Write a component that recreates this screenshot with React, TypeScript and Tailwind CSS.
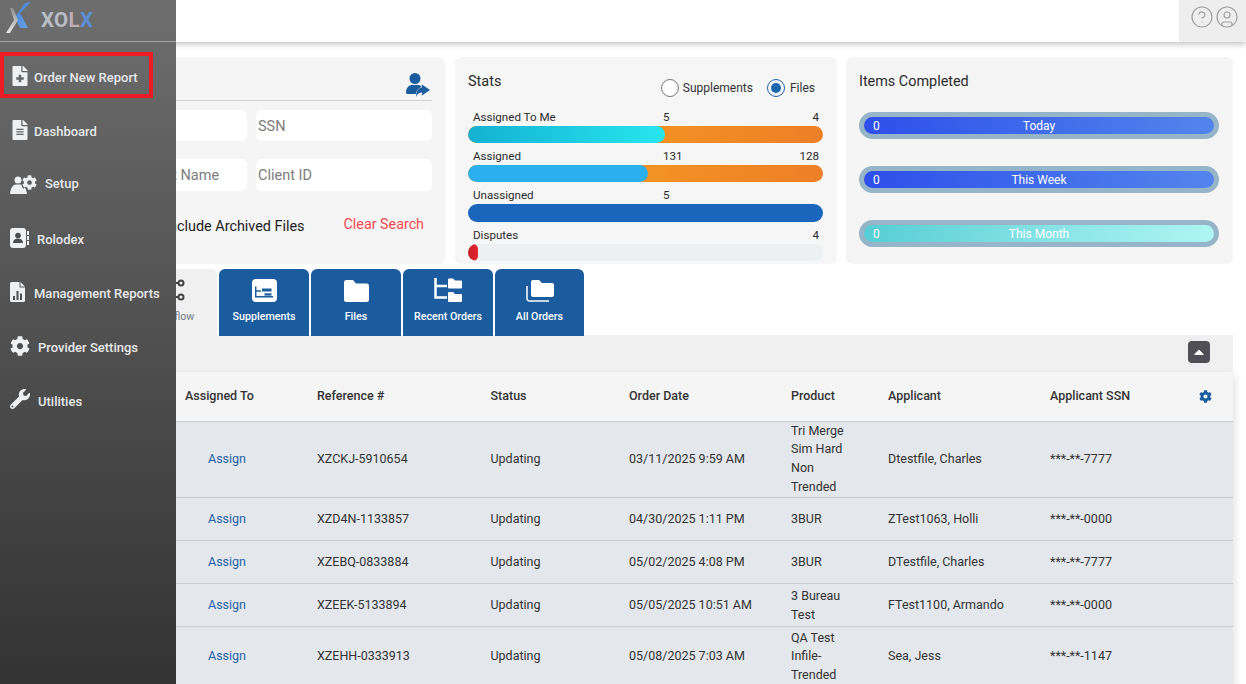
import React from "react";
import { FaFileMedical, FaFileAlt, FaCog, FaWrench, FaCaretUp } from "react-icons/fa";
import { CircleHelp, CircleUser } from "lucide-react";

const SetupIcon = () => (
  <span className="relative block h-[20px] w-[28px] text-[#eef0f2]">
    <svg width="28" height="20" viewBox="0 0 28 20" className="absolute left-0 top-0" fill="currentColor">
      <circle cx="8" cy="6" r="3.500" />
      <path d="M0 20C0.500 15 2 10.500 6.500 10.500H10.500C14 10.500 16 14 17 20Z" />
    </svg>
    <FaCog className="absolute left-[12px] top-[1px] text-[15px] drop-shadow-[-1px_1px_0_#5a5a5a]" />
  </span>
);

const navItems: { label: string; icon: React.ReactNode; gap: string; shift: string }[] = [
  { label: "Order New Report", icon: <FaFileMedical className="-translate-y-[2px] text-[20px] text-[#eef0f2]" />, gap: "w-[24px]", shift: "" },
  { label: "Dashboard", icon: <FaFileAlt className="-translate-y-[2px] text-[20px] text-[#eef0f2]" />, gap: "w-[24px]", shift: "" },
  { label: "Setup", icon: <SetupIcon />, gap: "w-[35px]", shift: "-translate-y-[2px]" },
  {
    label: "Rolodex",
    icon: (
      <svg width="19" height="20" viewBox="0 0 19 20" className="-translate-y-[2px]">
        <rect x="0" y="0" width="16" height="20" rx="3" fill="#eef0f2" />
        <rect x="17" y="3" width="2" height="4" fill="#eef0f2" />
        <rect x="17" y="8" width="2" height="4" fill="#eef0f2" />
        <rect x="17" y="13" width="2" height="4" fill="#eef0f2" />
        <circle cx="8" cy="7.500" r="2.800" fill="#4d4d4d" />
        <path d="M3 15c0-3 2-4.500 5-4.500s5 1.500 5 4.500z" fill="#4d4d4d" />
      </svg>
    ),
    gap: "w-[27px]",
    shift: "",
  },
  {
    label: "Management Reports",
    icon: (
      <svg width="15" height="20" viewBox="0 0 15 20" className="-translate-y-[2px]">
        <path d="M1.500 0H9.500V5.500H15V18.500A1.500 1.500 0 0 1 13.500 20H1.500A1.500 1.500 0 0 1 0 18.500V1.500A1.500 1.500 0 0 1 1.500 0Z" fill="#eef0f2" />
        <path d="M10.500 0L15 4.500H10.500Z" fill="#eef0f2" />
        <rect x="3" y="14" width="2" height="4" fill="#4d4d4d" />
        <rect x="6.500" y="9" width="2" height="9" fill="#4d4d4d" />
        <rect x="10" y="11.500" width="2" height="6.500" fill="#4d4d4d" />
      </svg>
    ),
    gap: "w-[24px]",
    shift: "",
  },
  { label: "Provider Settings", icon: <FaCog className="-translate-y-[2px] text-[20px] text-[#eef0f2]" />, gap: "w-[28px]", shift: "" },
  { label: "Utilities", icon: <FaWrench className="-translate-y-[3px] text-[20px] text-[#eef0f2]" />, gap: "w-[28px]", shift: "" },
];

const rows = [
  ["XZCKJ-5910654", "03/11/2025 9:59 AM", "Tri Merge Sim Hard Non Trended", "Dtestfile, Charles", "***-**-7777"],
  ["XZD4N-1133857", "04/30/2025 1:11 PM", "3BUR", "ZTest1063, Holli", "***-**-0000"],
  ["XZEBQ-0833884", "05/02/2025 4:08 PM", "3BUR", "DTestfile, Charles", "***-**-7777"],
  ["XZEEK-5133894", "05/05/2025 10:51 AM", "3 Bureau Test", "FTest1100, Armando", "***-**-0000"],
  ["XZEHH-0333913", "05/08/2025 7:03 AM", "QA Test Infile- Trended", "Sea, Jess", "***-**-1147"],
];

function Sidebar() {
  return (
    <aside className="absolute left-0 top-0 z-20 h-[684px] w-[176px] bg-gradient-to-b from-[#6e6e6e] to-[#333333]">
      <div className="flex h-[42px] items-center gap-[9px] border-b border-[#a3a3a3] pl-[6px]">
        <svg width="26" height="41" viewBox="6 0 26 41">
          <defs>
            <linearGradient id="xb" x1="0" y1="0" x2="1" y2="1">
              <stop offset="0" stopColor="#3f7fd6" />
              <stop offset="1" stopColor="#6ea6ea" />
            </linearGradient>
            <linearGradient id="xg" x1="0" y1="0" x2="0" y2="1">
              <stop offset="0" stopColor="#8f8f8f" />
              <stop offset="1" stopColor="#e4e4e4" />
            </linearGradient>
          </defs>
          <path d="M31 2L20 13L28 28H20L15 17L25 3Z" fill="url(#xb)" />
          <path d="M10 8H13L18 20L10 33H6L14 20Z" fill="url(#xg)" />
        </svg>
        <span className="text-[20.500px] font-bold tracking-[0.3px] text-[#b9bdc4]">
          XO<span className="text-[#bcaeb4]">L</span>
          <span className="text-[#5b8fd3]">X</span>
        </span>
      </div>
      <nav className="pt-[9px]">
        {navItems.map((item) => (
          <div key={item.label} className={`flex h-[54px] items-center text-[13px] font-medium text-[#e6e8ea] ${item.shift}`}>
            <div className="h-full w-[9px] shrink-0" />
            <div className={`${item.gap} ml-[1px] flex shrink-0 items-center`}>{item.icon}</div>
            <span>{item.label}</span>
          </div>
        ))}
      </nav>
      <div className="absolute left-0 top-[52px] h-[46px] w-[153px] border-[4px] border-[#ed1c24]" />
    </aside>
  );
}

function Header() {
  return (
    <header className="flex h-[42px] justify-end bg-white shadow-[0_2px_6px_rgba(0,0,0,0.25)]">
      <div className="flex w-[67px] items-center justify-center gap-[1px] bg-[#eeeeee] pb-[8px] pl-[4px] text-[#a0a0a0]">
        <CircleHelp size={24} strokeWidth={1.200} />
        <CircleUser size={24} strokeWidth={1.200} />
      </div>
    </header>
  );
}

function SearchCard() {
  const input =
    "w-full rounded-[6px] bg-white px-[2px] text-[14.500px] outline-none placeholder:text-[#7c7c7c]";
  return (
    <section className="h-[207px] w-[385px] rounded-[6px] bg-[#f5f5f5] pl-[12px] pr-[13px] pt-[16px]">
      <div className="flex h-[28px] justify-end border-b border-[#d2d2d2]">
        <svg width="24" height="24" viewBox="0 0 24 24" className="mr-[2px] text-[#1a5c9e]" fill="currentColor">
          <circle cx="9" cy="5.500" r="5.500" />
          <path d="M0 19.500C0 14.500 3 12 6.500 12H11.500C14 12 16 13 17 15L11 21H2C1 21 0 20.500 0 19.500Z" />
          <path d="M16 11.500L24 17L16 22.500V19.500C13 19.500 11 21 10 24C10 19 12 15 16 14.500Z" stroke="#f5f5f5" strokeWidth="1" paintOrder="stroke" />
        </svg>
      </div>
      <div className="mt-[9px] grid grid-cols-[176px_176px] justify-end gap-x-[9px] gap-y-[18px]">
        <input className={`${input} h-[31px]`} aria-label="Order" />
        <input className={`${input} h-[31px] pt-[1px]`} placeholder="SSN" />
        <input className={`${input} h-[32px] pl-[78px]`} placeholder="Last Name" />
        <input className={`${input} h-[32px]`} placeholder="Client ID" />
      </div>
      <div className="mt-[25px] flex items-center justify-end text-[14.400px]">
        <span className="text-[#222222]">Include Archived Files</span>
        <span className="ml-[39px] mr-[8px] -translate-y-[2px] text-[14.300px] text-[#f4484f]">Clear Search</span>
      </div>
    </section>
  );
}

function Bar({ label, mid, right, track, fill, fillWidth, h = "h-[17px]" }: { label: string; mid?: string; right?: string; track: string; fill?: string; fillWidth?: number; h?: string }) {
  return (
    <div>
      <div className="relative flex h-[21px] translate-y-[1px] items-center pl-[5px] pt-[3px] text-[11.600px] text-[#2b2b2b]">
        <span>{label}</span>
        {mid && <span className="absolute left-[195px]">{mid}</span>}
        {right && <span className="absolute right-[4px]">{right}</span>}
      </div>
      <div className={`${h} overflow-hidden rounded-full ${track}`}>
        {fill && <div className={`h-full rounded-full ${fill}`} style={{ width: fillWidth }} />}
      </div>
    </div>
  );
}

function StatsCard() {
  return (
    <section className="h-[207px] w-[382px] rounded-[6px] bg-[#f6f6f6] pl-[13px] pr-[14px] pt-[14px]">
      <div className="flex h-[27px] items-start justify-between">
        <h2 className="text-[14.500px] text-[#2b2b2b]">Stats</h2>
        <div className="mr-[8px] mt-[8px] flex items-center text-[12px] text-[#333333]">
          <span className="mr-[4px] h-[18px] w-[18px] rounded-full border border-[#777777] bg-white" />
          <span>Supplements</span>
          <span className="ml-[14px] mr-[5px] flex h-[18px] w-[18px] items-center justify-center rounded-full border border-[#1a66b0]">
            <span className="h-[10px] w-[10px] rounded-full bg-[#1a66b0]" />
          </span>
          <span>Files</span>
        </div>
      </div>
      <div className="mt-[7px] flex flex-col gap-y-[1px]">
        <Bar label="Assigned To Me" mid="5" right="4" track="bg-gradient-to-r from-[#f6a51e] to-[#ee7f27]" fill="bg-gradient-to-r from-[#14b1d3] to-[#27e6ee]" fillWidth={197} />
        <Bar label="Assigned" mid="131" right="128" track="bg-gradient-to-r from-[#f6a51e] to-[#ee7f27]" fill="bg-[#2bb0ef]" fillWidth={180} />
        <Bar label="Unassigned" mid="5" track="bg-[#1a66bd]" h="h-[18px]" />
        <Bar label="Disputes" right="4" track="bg-[#edf0f2]" fill="bg-gradient-to-r from-[#c81e26] to-[#e5262e]" fillWidth={10} />
      </div>
    </section>
  );
}

function Pill({ label, fill }: { label: string; fill: string }) {
  return (
    <div className={`relative flex h-[27px] w-[360px] items-center justify-center rounded-full border-[5px] border-[#97b5c8] text-[12px] text-white ${fill}`}>
      <span className="absolute left-[9px]">0</span>
      <span>{label}</span>
    </div>
  );
}

function ItemsCard() {
  return (
    <section className="h-[207px] w-[387px] rounded-[6px] bg-[#f5f5f5] px-[13px] pt-[14px]">
      <h2 className="text-[14.400px] text-[#2b2b2b]">Items Completed</h2>
      <div className="mt-[19.500px] flex flex-col gap-y-[27px]">
        <Pill label="Today" fill="bg-gradient-to-r from-[#2f4eea] to-[#5484ec]" />
        <Pill label="This Week" fill="bg-gradient-to-r from-[#2f4eea] to-[#5484ec]" />
        <Pill label="This Month" fill="bg-gradient-to-r from-[#55ced5] to-[#aef6f3]" />
      </div>
    </section>
  );
}

const SupIcon = () => (
  <svg width="25" height="23" viewBox="0 0 25 23">
    <rect width="25" height="23" rx="4" fill="#fff" />
    <path d="M3.700 7.500V17.700H21M3.700 12H9" stroke="#1a5c9e" strokeWidth="1.500" fill="none" />
    <rect x="10" y="9.500" width="9.500" height="3" fill="#1a5c9e" />
    <rect x="12.500" y="14.300" width="7" height="2.300" fill="#1a5c9e" />
  </svg>
);

const FolderIcon = () => (
  <svg width="25" height="22" viewBox="0 0 25 22">
    <path d="M0 2.500A2.500 2.500 0 0 1 2.500 0H9L12 3.500H22.500A2.500 2.500 0 0 1 25 6V19.500A2.500 2.500 0 0 1 22.500 22H2.500A2.500 2.500 0 0 1 0 19.500Z" fill="#fff" />
  </svg>
);

const TreeIcon = () => (
  <svg width="28" height="24" viewBox="0 0 28 24">
    <path d="M1.500 0V19.500H13M1.500 8H13" stroke="#fff" strokeWidth="2.500" fill="none" />
    <path d="M14 1.500a1 1 0 0 1 1-1h4l2 2h6a1 1 0 0 1 1 1v6a1 1 0 0 1-1 1H15a1 1 0 0 1-1-1z" fill="#fff" />
    <path d="M14 15a1 1 0 0 1 1-1h4l2 2h6a1 1 0 0 1 1 1v6a1 1 0 0 1-1 1H15a1 1 0 0 1-1-1z" fill="#fff" />
  </svg>
);

const AllIcon = () => (
  <svg width="28" height="22" viewBox="0 0 28 22">
    <path d="M1 6V18.500A2.500 2.500 0 0 0 3.500 21H23" stroke="#fff" strokeWidth="1.500" fill="none" />
    <path d="M5 2a2 2 0 0 1 2-2h6l3 3h10a2 2 0 0 1 2 2v10a2 2 0 0 1-2 2H7a2 2 0 0 1-2-2z" fill="#fff" />
  </svg>
);

function Tabs() {
  const tabs: [string, React.ReactNode, string][] = [
    ["Supplements", <SupIcon />, "w-[90px] mr-[2px]"],
    ["Files", <FolderIcon />, "w-[90px] mr-[2px]"],
    ["Recent Orders", <TreeIcon />, "w-[90px] mr-[2px]"],
    ["All Orders", <AllIcon />, "w-[89px]"],
  ];
  return (
    <div className="mt-[5px] flex h-[67px] pl-[67px]">
      <div className="mr-[2px] flex h-[67px] w-[90px] flex-col items-center rounded-t-[6px] bg-[#f0f0f0] pt-[9px] text-[10.700px] text-[#6f7a82]">
        <svg width="24" height="24" viewBox="0 0 24 24" className="ml-[4px] text-[#444444]">
          <path d="M4 12H12M12 5H18M12 19H18M12 5V19" stroke="currentColor" strokeWidth="2" fill="none" />
          <circle cx="19" cy="5" r="2.500" fill="#f0f0f0" stroke="currentColor" strokeWidth="2" />
          <circle cx="19" cy="19" r="2.500" fill="#f0f0f0" stroke="currentColor" strokeWidth="2" />
        </svg>
        <span className="mt-[7px]">Workflow</span>
      </div>
      {tabs.map(([label, icon, width]) => (
        <div key={label} className={`${width} flex h-[67px] flex-col items-center rounded-t-[6px] bg-[#1a5c9e] text-[10.700px] font-medium text-white`}>
          <div className="flex h-[33px] items-end">{icon}</div>
          <span className="mt-[7px]">{label}</span>
        </div>
      ))}
    </div>
  );
}

function OrdersTable() {
  const th = "pl-[8px] text-left text-[12.500px] font-medium text-[#333333]";
  return (
    <div className="shadow-[2px_4px_8px_rgba(0,0,0,0.12)]">
      <table className="w-full table-fixed border-collapse text-[12.500px] leading-[18.700px] text-[#333333]">
        <colgroup>
          <col className="w-[117px]" />
          <col className="w-[132px]" />
          <col className="w-[173.500px]" />
          <col className="w-[138.500px]" />
          <col className="w-[162px]" />
          <col className="w-[97px]" />
          <col className="w-[162px]" />
          <col className="w-[149px]" />
          <col />
        </colgroup>
        <thead>
          <tr className="h-[49px] bg-[#f5f5f5]">
            <th />
            <th className={th}>Assigned To</th>
            <th className={th}>Reference #</th>
            <th className={th}>Status</th>
            <th className={th}>Order Date</th>
            <th className={th}>Product</th>
            <th className={th}>Applicant</th>
            <th className={th}>Applicant SSN</th>
            <th className={th}>
              <FaCog className="text-[13px] text-[#1a5c9e]" />
            </th>
          </tr>
        </thead>
        <tbody>
          {rows.map((r, i) => {
            const td = `pl-[8px] align-middle ${i === 0 ? "" : "pt-[2px]"}`;
            return (
              <tr key={r[0]} className={`${i === 0 ? "h-[76px]" : "h-[43px]"} border-t border-[#c8ccd1] bg-[#e4e7ec]`}>
                <td />
                <td className={`${td} pl-[31px] text-[#1f62a8]`}>Assign</td>
                <td className={td}>{r[0]}</td>
                <td className={td}>Updating</td>
                <td className={td}>{r[1]}</td>
                <td className={td}>
                  <div className="w-[62px]">{r[2]}</div>
                </td>
                <td className={td}>{r[3]}</td>
                <td className={td}>{r[4]}</td>
                <td />
              </tr>
            );
          })}
        </tbody>
      </table>
    </div>
  );
}

export default function App() {
  return (
    <div className="relative h-[684px] w-[1246px] overflow-hidden bg-white font-['Roboto',sans-serif]">
      <Sidebar />
      <Header />
      <main className="pl-[60px] pr-[13px] pt-[15px]">
        <div className="flex gap-x-[10px]">
          <SearchCard />
          <StatsCard />
          <div className="-ml-[1px]">
            <ItemsCard />
          </div>
        </div>
        <Tabs />
        <div className="-mt-[1px] flex h-[37px] items-start justify-end bg-[#f0f0f0] pr-[23px] pt-[6px]">
          <div className="flex h-[22px] w-[22px] items-center justify-center rounded-[4px] bg-[#4f4f55] text-[16px] text-white">
            <FaCaretUp />
          </div>
        </div>
        <OrdersTable />
      </main>
    </div>
  );
}
